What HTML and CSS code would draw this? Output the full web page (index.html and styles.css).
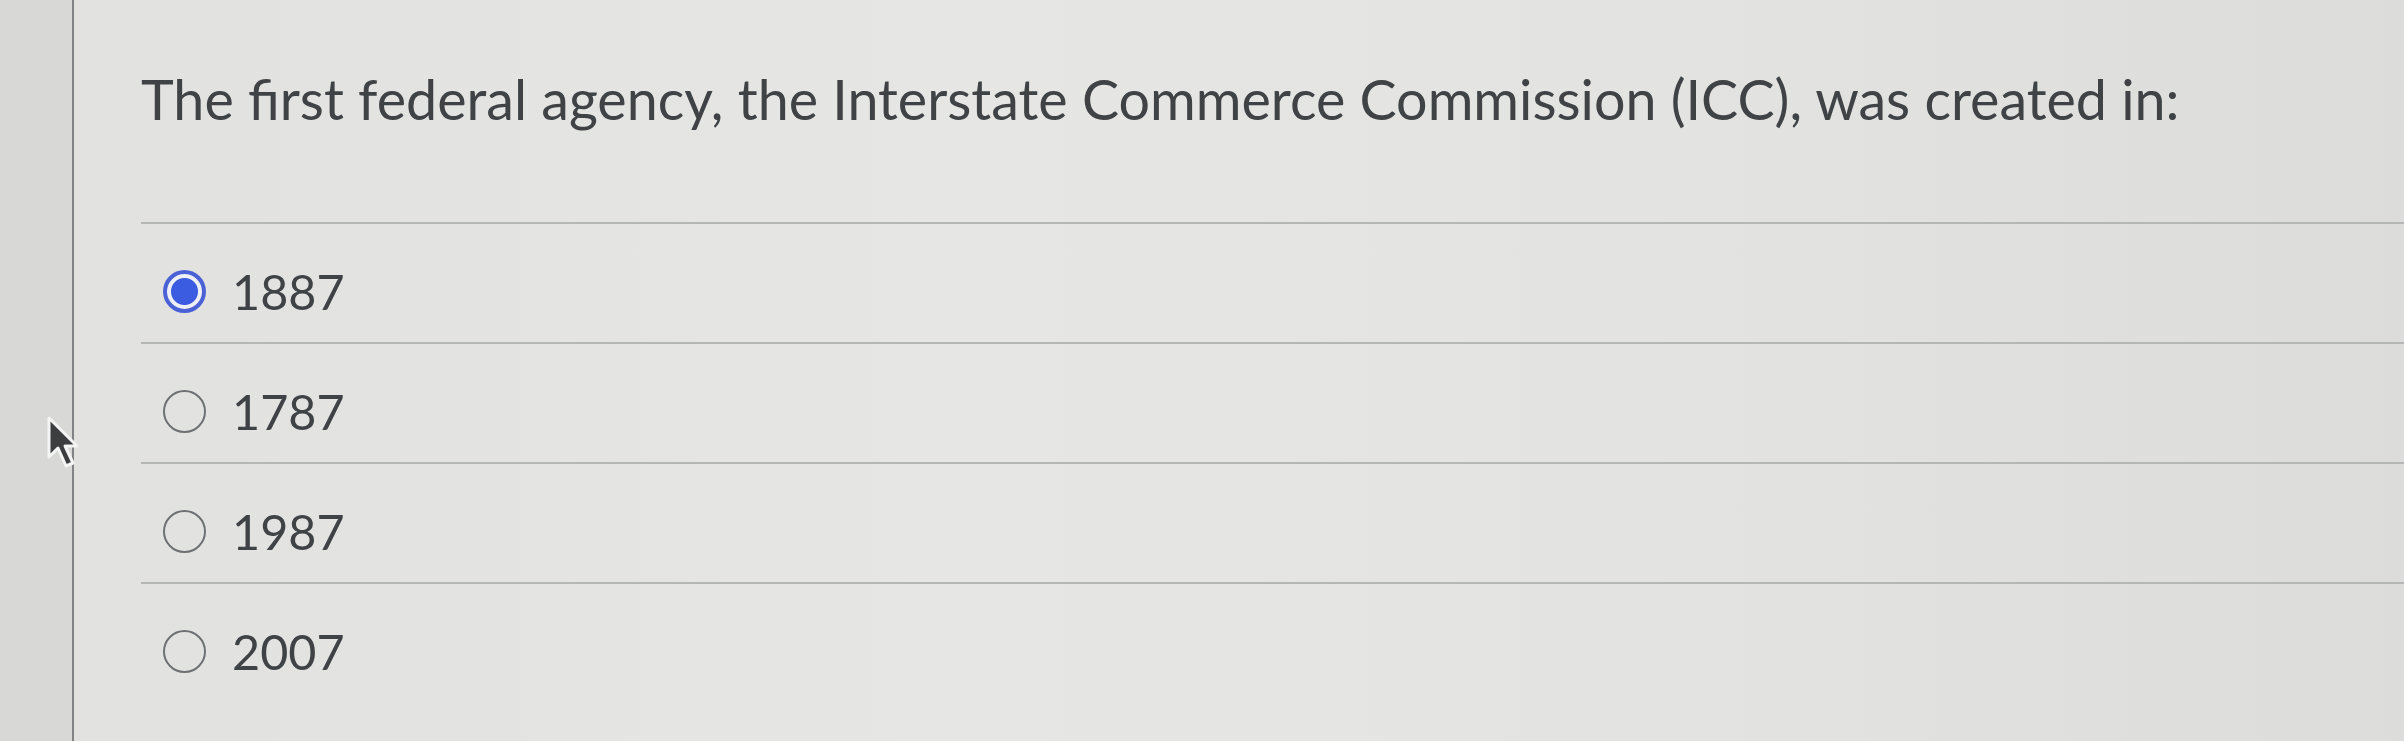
FILE: index.html
```html
<!DOCTYPE html>
<html lang="en">
<head>
<meta charset="utf-8">
<title>Quiz question</title>
<link rel="stylesheet" href="styles.css">
</head>
<body>
<div class="screen">
  <aside class="rail"></aside>
  <main class="quiz">
    <h1 class="question">The first federal agency, the Interstate Commerce Commission (ICC), was created in:</h1>
    <ul class="answers">
      <li class="answer"><span class="radio checked"></span><span class="label">1887</span></li>
      <li class="answer"><span class="radio"></span><span class="label">1787</span></li>
      <li class="answer"><span class="radio"></span><span class="label">1987</span></li>
      <li class="answer"><span class="radio"></span><span class="label">2007</span></li>
    </ul>
  </main>
  <svg class="cursor" width="34" height="54" viewBox="0 0 34 54" aria-hidden="true">
    <path d="M3 3 L3 42 L12 33 L20 51 L27 48 L19 31 L31 31 Z" fill="#3b3d3f" stroke="#f4f4f4" stroke-width="3" stroke-linejoin="round"/>
  </svg>
</div>
</body>
</html>
```
FILE: styles.css
```css
html, body {
  margin: 0;
  padding: 0;
}
body {
  width: 2404px;
  height: 741px;
  overflow: hidden;
  background: #e3e4e2;
  font-family: "Lato", "Liberation Sans", sans-serif;
  color: #3f4346;
}
.screen {
  position: relative;
  display: flex;
  height: 741px;
  background: linear-gradient(90deg, #e1e2e0 0%, #e6e7e5 40%, #e3e4e2 70%, #dcdddb 100%);
}
.rail {
  width: 72px;
  flex: none;
  background: #d8d9d7;
  border-right: 2px solid #808283;
}
.quiz {
  flex: 1;
  padding: 65px 0 0 67px;
}
.question {
  margin: 0 0 90px;
  font-weight: 400;
  font-size: 55.6px;
  line-height: 67px;
  letter-spacing: 0;
  white-space: nowrap;
  color: #3f4346;
}
.answers {
  list-style: none;
  margin: 0;
  padding: 0;
}
.answer {
  display: flex;
  align-items: center;
  height: 47px;
  padding: 44px 0 27px;
  border-top: 2px solid #b5b7b6;
}
.radio {
  box-sizing: border-box;
  width: 43px;
  height: 43px;
  border-radius: 50%;
  border: 2px solid #6e7173;
  margin-left: 22px;
  flex: none;
}
.radio.checked {
  border: 4px solid #4b62d6;
  background: radial-gradient(circle, #3b5be0 0 13px, #eef0f5 14px);
}
.label {
  margin-left: 26px;
  font-size: 48.5px;
  line-height: 47px;
  color: #3f4346;
}
.cursor {
  position: absolute;
  left: 46px;
  top: 415px;
}
```
